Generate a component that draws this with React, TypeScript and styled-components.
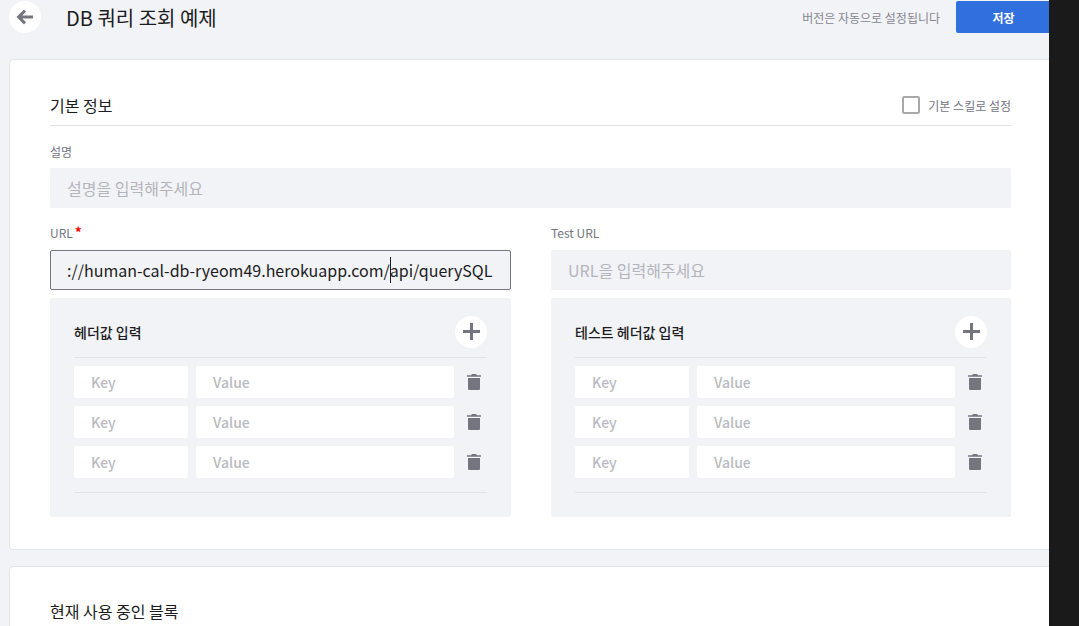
import React from 'react';
import styled, {createGlobalStyle} from 'styled-components';

const FONT = '"Noto Sans CJK KR", "Noto Sans", sans-serif';

const GlobalStyle = createGlobalStyle`
  html, body {
    margin: 0;
    padding: 0;
    height: 100%;
    overflow: hidden;
    background: #f2f3f7;
    font-family: ${FONT};
  }
  * {
    box-sizing: border-box;
  }
`;

const Page = styled.div`
  display: flex;
  width: 1079px;
  height: 626px;
  overflow: hidden;
`;

const Main = styled.main`
  flex: 0 0 1049px;
  width: 1049px;
  overflow: hidden;
  padding-top: 1px;
  background: #f2f3f7;
`;

const Scrollbar = styled.div`
  flex: 0 0 30px;
  background: #1a1a1a;
`;

const Header = styled.header`
  display: flex;
  align-items: center;
  height: 32px;
  margin-bottom: 26px;
  padding-left: 9px;
`;

const BackButton = styled.button`
  display: flex;
  align-items: center;
  justify-content: center;
  width: 32px;
  height: 32px;
  padding: 0;
  border: 0;
  border-radius: 50%;
  background: #fff;
  color: #74757f;
`;

const Title = styled.h1`
  flex: 1;
  margin: 1px 0 0 25px;
  font-size: 20px;
  line-height: 32px;
  font-weight: 400;
  color: #1c1c22;
`;

const VersionNote = styled.span`
  margin-right: 16px;
  font-size: 12px;
  color: #85868f;
`;

const SaveButton = styled.button`
  width: 93px;
  height: 32px;
  padding: 0 0 0 2px;
  border: 0;
  border-radius: 2px 0 0 2px;
  background: #2f6fde;
  color: #fff;
  font-family: ${FONT};
  font-size: 12px;
  font-weight: 700;
`;

const Card = styled.section`
  width: 1060px;
  margin-left: 9px;
  margin-bottom: 16px;
  padding: 0 57px 32px 40px;
  border: 1px solid #e4e5e8;
  border-radius: 4px;
  background: #fff;
`;

const CardHead = styled.div<{$plain?: boolean}>`
  display: flex;
  align-items: center;
  justify-content: space-between;
  height: ${(p) => (p.$plain ? '64px' : '66px')};
  padding-top: 24px;
  border-bottom: 1px solid ${(p) => (p.$plain ? 'transparent' : '#e2e2e2')};
`;

const CardTitle = styled.h2`
  margin: 0;
  font-size: 16px;
  font-weight: 400;
  color: #1c1c22;
`;

const CheckLabel = styled.label`
  display: flex;
  align-items: center;
  gap: 8px;
  margin-top: 1px;
  font-size: 12px;
  color: #74757f;
`;

const CheckBox = styled.span`
  width: 18px;
  height: 18px;
  border: 2px solid #a9a9a9;
  border-radius: 2px;
`;

const FieldLabel = styled.label<{$tight?: boolean}>`
  display: block;
  height: 17px;
  margin-top: ${(p) => (p.$tight ? '-1px' : '0')};
  margin-bottom: ${(p) => (p.$tight ? '9px' : '8px')};
  font-size: 12px;
  line-height: 17px;
  color: #74757f;
`;

const Required = styled.span`
  margin-left: 2px;
  color: #f00;
  font-size: 14px;
  font-weight: 700;
`;

const DescriptionBlock = styled.div`
  padding-top: 17px;
`;

const Columns = styled.div`
  display: grid;
  grid-template-columns: 461px 460px;
  gap: 40px;
  padding-top: 17px;
`;

const TextField = styled.div<{$focused?: boolean}>`
  display: flex;
  align-items: center;
  height: 40px;
  padding: 0 16px;
  overflow: hidden;
  white-space: nowrap;
  border: 1px solid ${(p) => (p.$focused ? '#74757f' : '#f2f3f7')};
  border-radius: 2px;
  background: #f2f3f7;
  font-size: 16px;
  color: ${(p) => (p.$focused ? '#1c1c22' : '#b4b5bb')};
`;

const Caret = styled.span`
  display: inline-block;
  width: 1px;
  height: 26px;
  margin: 0 -1px 0 0;
  background: #1c1c22;
`;

const HeaderPanel = styled.div`
  height: 219px;
  margin-top: 8px;
  padding: 18px 24px 0;
  border-radius: 2px;
  background: #f2f3f7;
`;

const PanelHead = styled.div`
  display: flex;
  align-items: center;
  justify-content: space-between;
  height: 42px;
  padding-bottom: 10px;
  border-bottom: 1px solid #e2e3e6;
`;

const PanelTitle = styled.h3`
  margin: 0;
  font-size: 14px;
  font-weight: 500;
  color: #1c1c22;
`;

const AddButton = styled.button`
  display: flex;
  align-items: center;
  justify-content: center;
  width: 32px;
  height: 32px;
  padding: 0;
  border: 0;
  border-radius: 50%;
  background: #fff;
  color: #74757f;
`;

const Rows = styled.div`
  display: flex;
  flex-direction: column;
  gap: 8px;
  padding: 8px 0 14px;
  border-bottom: 1px solid #e2e3e6;
`;

const Row = styled.div`
  display: grid;
  grid-template-columns: 114px 258px 24px;
  gap: 8px;
  align-items: center;
`;

const Cell = styled.div`
  height: 32px;
  padding-left: 17px;
  border-radius: 2px;
  background: #fff;
  font-size: 14px;
  font-weight: 500;
  line-height: 32px;
  color: #b9bac0;
`;

const TrashButton = styled.button`
  display: flex;
  align-items: center;
  justify-content: center;
  padding: 0;
  border: 0;
  background: none;
  color: #74757f;
`;

const BackIcon = () => (
  <svg width="18" height="16" viewBox="0 0 18 16" fill="none" stroke="currentColor" strokeWidth="3">
    <path d="M17 8H3M9 1.6 2.6 8 9 14.4" />
  </svg>
);

const PlusIcon = () => (
  <svg width="17" height="17" viewBox="0 0 18 18" fill="currentColor">
    <path d="M7.4 0h3.2v7.4H18v3.2h-7.4V18H7.4v-7.4H0V7.4h7.4z" />
  </svg>
);

const TrashIcon = () => (
  <svg width="14" height="16" viewBox="0 0 14 16" fill="currentColor">
    <path d="M5 0h4l1 1.2h4v1.6H0V1.2h4zM1 4h12v11a1 1 0 0 1-1 1H2a1 1 0 0 1-1-1z" />
  </svg>
);

const HeaderInputs = ({title}: {title: string}) => (
  <HeaderPanel>
    <PanelHead>
      <PanelTitle>{title}</PanelTitle>
      <AddButton><PlusIcon /></AddButton>
    </PanelHead>
    <Rows>
      {[0, 1, 2].map((i) => (
        <Row key={i}>
          <Cell>Key</Cell>
          <Cell>Value</Cell>
          <TrashButton><TrashIcon /></TrashButton>
        </Row>
      ))}
    </Rows>
  </HeaderPanel>
);

const App = () => (
  <Page>
    <GlobalStyle />
    <Main>
      <Header>
        <BackButton><BackIcon /></BackButton>
        <Title>DB 쿼리 조회 예제</Title>
        <VersionNote>버전은 자동으로 설정됩니다</VersionNote>
        <SaveButton>저장</SaveButton>
      </Header>

      <Card>
        <CardHead>
          <CardTitle>기본 정보</CardTitle>
          <CheckLabel>
            <CheckBox />
            기본 스킬로 설정
          </CheckLabel>
        </CardHead>

        <DescriptionBlock>
          <FieldLabel>설명</FieldLabel>
          <TextField>설명을 입력해주세요</TextField>
        </DescriptionBlock>

        <Columns>
          <div>
            <FieldLabel $tight>URL<Required>*</Required></FieldLabel>
            <TextField $focused>
              ://human-cal-db-ryeom49.herokuapp.com/<Caret />api/querySQL
            </TextField>
            <HeaderInputs title="헤더값 입력" />
          </div>
          <div>
            <FieldLabel $tight>Test URL</FieldLabel>
            <TextField>URL을 입력해주세요</TextField>
            <HeaderInputs title="테스트 헤더값 입력" />
          </div>
        </Columns>
      </Card>

      <Card>
        <CardHead $plain>
          <CardTitle>현재 사용 중인 블록</CardTitle>
        </CardHead>
      </Card>
    </Main>
    <Scrollbar />
  </Page>
);

export default App;
